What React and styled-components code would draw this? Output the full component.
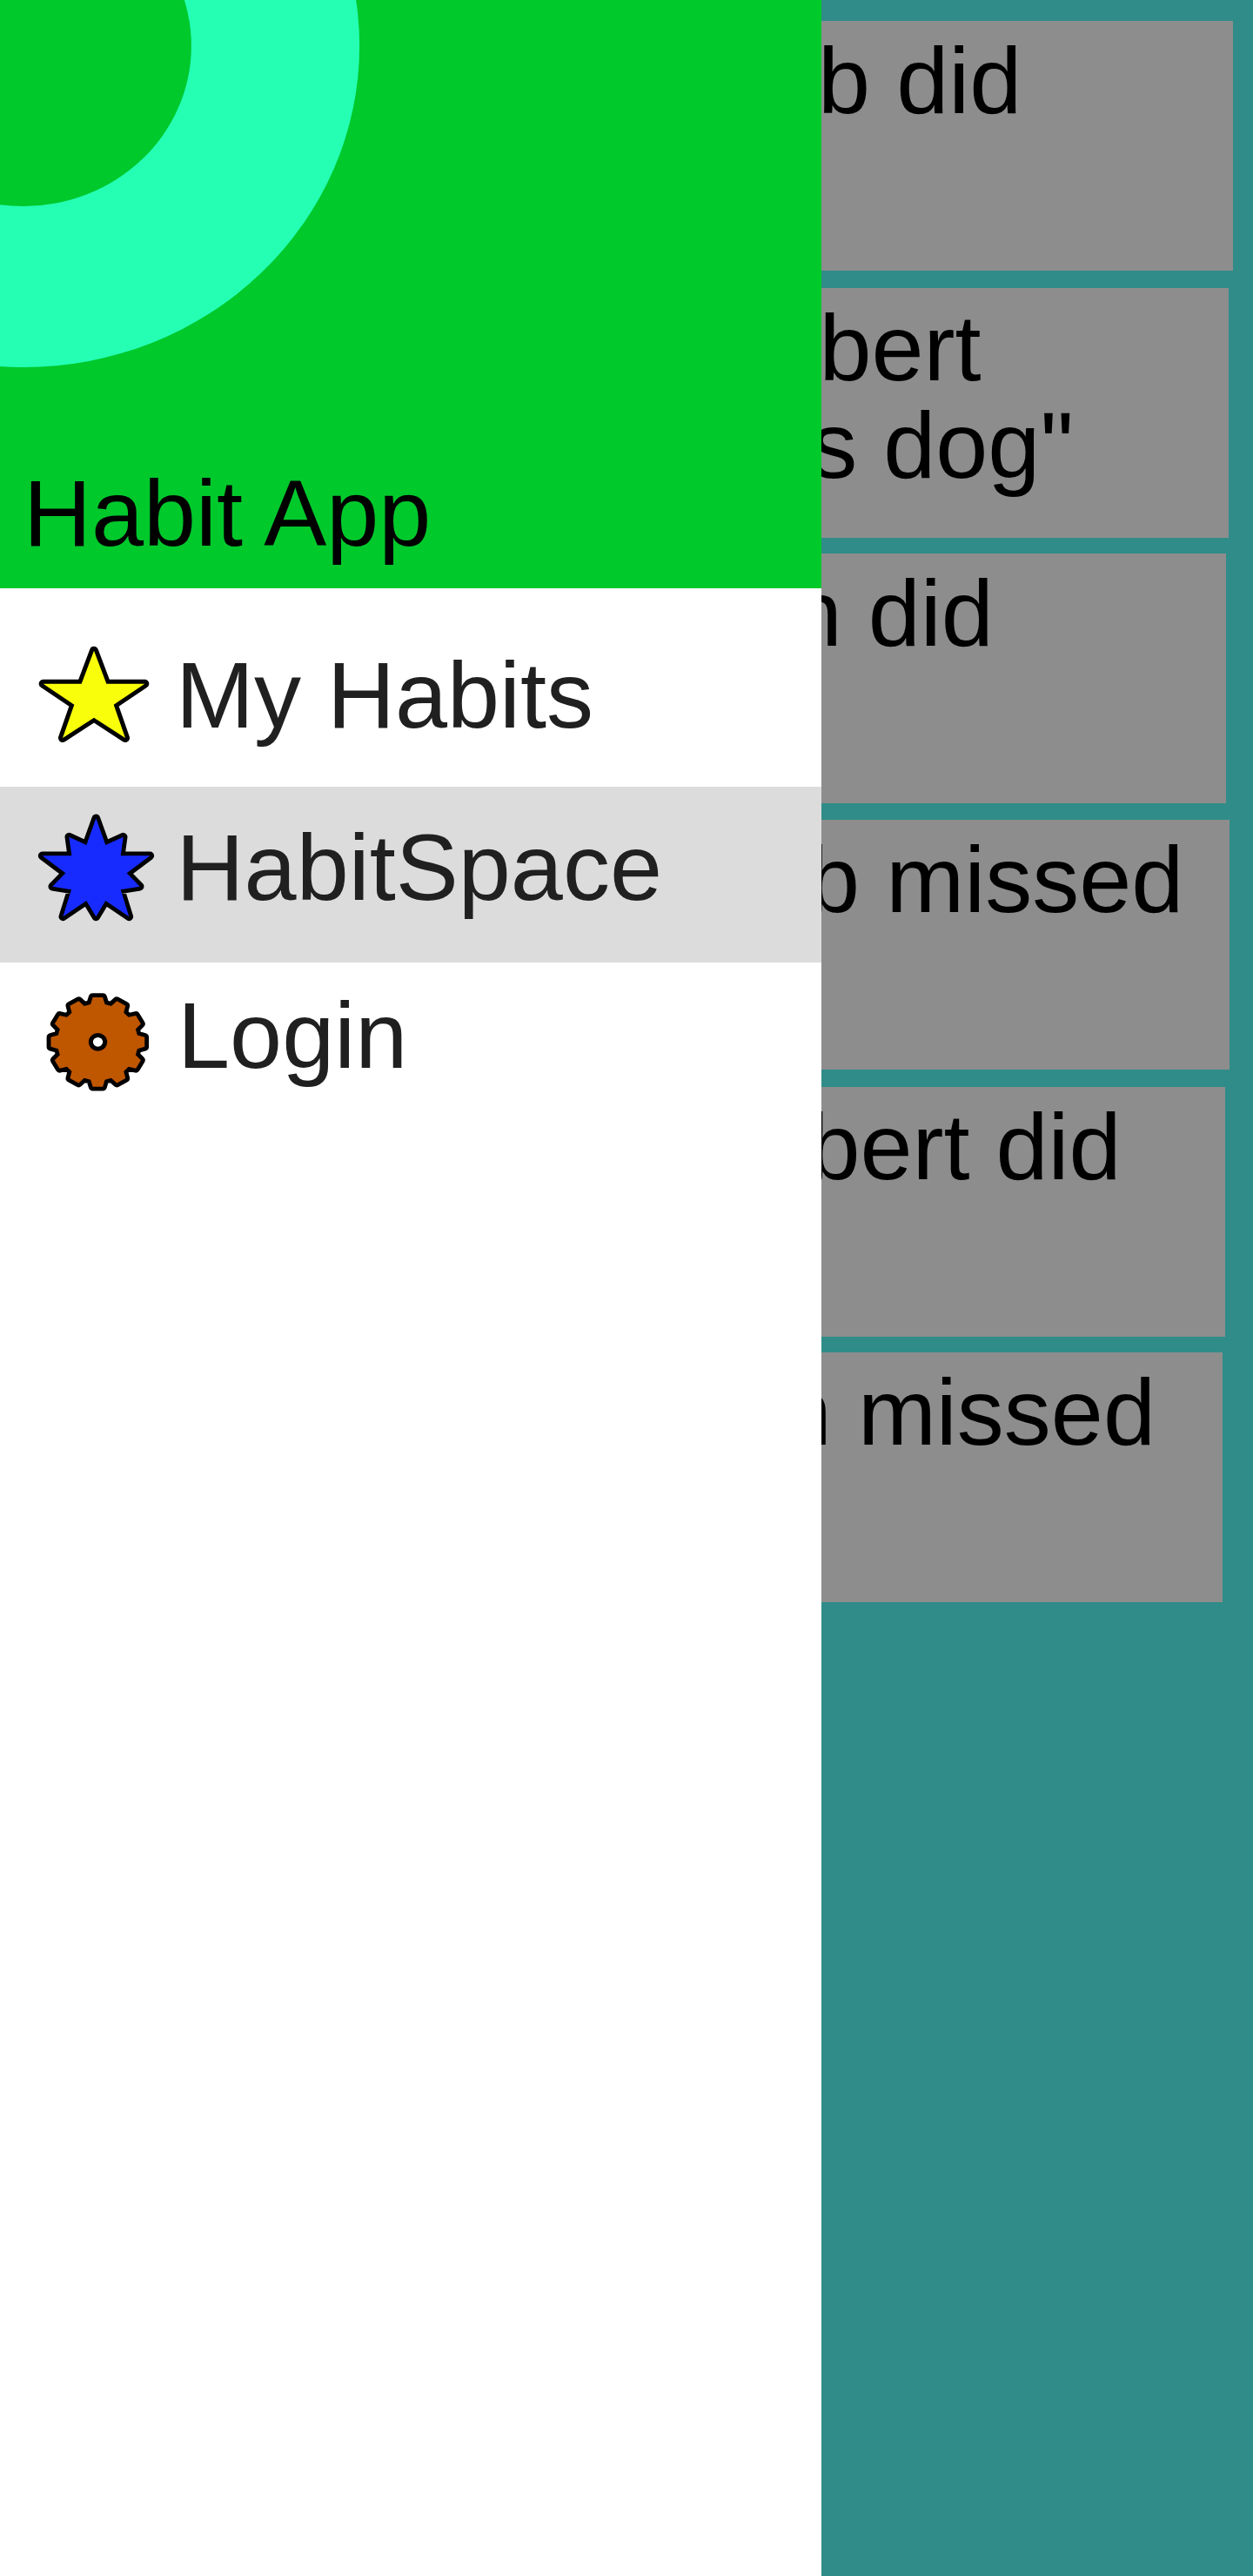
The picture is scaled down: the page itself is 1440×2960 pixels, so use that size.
import React from "react";
import styled, { createGlobalStyle } from "styled-components";

const GlobalStyle = createGlobalStyle`
  *, *::before, *::after { box-sizing: border-box; }
  body {
    margin: 0;
    background: #308c88;
    font-family: "Liberation Sans", Arial, sans-serif;
    font-size: 108px;
  }
`;

const Screen = styled.div`
  display: flex;
  width: 1440px;
  height: 2960px;
  overflow: hidden;
  background: #308c88;
`;

const Drawer = styled.nav`
  flex: none;
  width: 944px;
  height: 100%;
  background: #ffffff;
`;

const DrawerHeader = styled.header`
  position: relative;
  display: flex;
  align-items: flex-end;
  height: 676px;
  padding: 0 27px 26px;
  overflow: hidden;
  background: #00c92c;
`;

const HeaderRing = styled.svg`
  position: absolute;
  top: 0;
  left: 0;
`;

const AppTitle = styled.h1`
  position: relative;
  margin: 0;
  font-size: 108px;
  font-weight: 400;
  line-height: 120px;
  color: #000000;
  white-space: nowrap;
`;

const Menu = styled.ul`
  margin: 0;
  padding: 0;
  list-style: none;
`;

const MenuItem = styled.li`
  display: flex;
  align-items: flex-start;
  height: ${(p) => p.$height}px;
  padding-left: ${(p) => p.$inset}px;
  background: ${(p) => (p.$active ? "#dcdcdc" : "transparent")};
`;

const Icon = styled.svg`
  flex: none;
  margin-top: ${(p) => p.$top}px;
  stroke: #000000;
  stroke-linejoin: round;
`;

const MenuLabel = styled.span`
  padding-top: ${(p) => p.$top}px;
  padding-left: ${(p) => p.$gap}px;
  line-height: 120px;
  color: #202020;
  white-space: nowrap;
`;

const Feed = styled.main`
  display: flex;
  flex-direction: column;
  align-items: flex-start;
  padding-top: 24px;
`;

const Card = styled.article`
  width: ${(p) => p.$width}px;
  height: 287px;
  margin-bottom: ${(p) => p.$gap}px;
  padding-top: 13px;
  overflow: hidden;
  background: #8d8d8d;
`;

const CardLine = styled.div`
  line-height: 111.5px;
  text-indent: -${(p) => p.$shift}px;
  color: #000000;
  white-space: nowrap;
`;

function StarIcon() {
  return (
    <Icon $top={54} width="160" height="140" viewBox="0 0 480 420">
      <polygon
        points="234,53 277,167 409,167 302,239 342,354 234,284 126,354 166,239 59,167 191,167"
        fill="#f9ff0a"
        strokeWidth="30"
        paintOrder="stroke"
      />
    </Icon>
  );
}

function BurstIcon() {
  return (
    <Icon $top={16} width="160" height="150" viewBox="0 0 480 450">
      <polygon
        points="241,61 274,153 335,125 326,190 427,190 347,250 392,296 326,307 355,400 274,345 241,400 208,345 127,400 156,307 91,296 136,250 56,190 157,190 148,125 208,153"
        fill="#172bff"
        strokeWidth="29"
        paintOrder="stroke"
      />
    </Icon>
  );
}

const TOOTH = [
  [-23.5, 130],
  [-16.5, 154],
  [16.5, 154],
  [23.5, 130],
];

const gearPoints = Array.from({ length: 12 }, (_, k) => {
  const a = (k * Math.PI) / 6;
  return TOOTH.map(([x, r]) => {
    const px = 217 + 1.05 * (r * Math.sin(a) + x * Math.cos(a));
    const py = 232 - (r * Math.cos(a) - x * Math.sin(a));
    return `${px.toFixed(1)},${py.toFixed(1)}`;
  }).join(" ");
}).join(" ");

function GearIcon() {
  return (
    <Icon $top={14} width="150" height="150" viewBox="0 0 450 450">
      <polygon points={gearPoints} fill="#bf5600" strokeWidth="29" paintOrder="stroke" />
      <ellipse cx="217.5" cy="232" rx="24.5" ry="23.5" fill="#ffffff" strokeWidth="15" />
    </Icon>
  );
}

const menu = [
  { label: "My Habits", icon: StarIcon, height: 228, inset: 30, top: 62.6, gap: 12 },
  { label: "HabitSpace", icon: BurstIcon, height: 202, inset: 30, top: 33, gap: 12.6, active: true },
  { label: "Login", icon: GearIcon, height: 202, inset: 40, top: 23.5, gap: 14 },
];

const cards = [
  { width: 473, gap: 20, lines: [["b did", 3.9]] },
  { width: 468, gap: 18, lines: [["bert", 2.6], ['s dog"', 12.8]] },
  { width: 465, gap: 19, lines: [["n did", 36.3]] },
  { width: 469, gap: 20, lines: [["b missed", 15.9]] },
  { width: 464, gap: 18, lines: [["bert did", 15.6]] },
  { width: 461, gap: 0, lines: [["n missed", 48.2]] },
];

export default function App() {
  return (
    <>
      <GlobalStyle />
      <Screen>
        <Drawer>
          <DrawerHeader>
            <HeaderRing width="440" height="440" viewBox="0 0 440 440">
              <ellipse cx="26.7" cy="52.7" rx="386.4" ry="369.3" fill="#24ffb4" />
              <ellipse cx="26.7" cy="52.7" rx="193.2" ry="184.4" fill="#00c92c" />
            </HeaderRing>
            <AppTitle>Habit App</AppTitle>
          </DrawerHeader>
          <Menu>
            {menu.map(({ label, icon: ItemIcon, height, inset, top, gap, active }) => (
              <MenuItem key={label} $height={height} $inset={inset} $active={active}>
                <ItemIcon />
                <MenuLabel $top={top} $gap={gap}>{label}</MenuLabel>
              </MenuItem>
            ))}
          </Menu>
        </Drawer>
        <Feed>
          {cards.map((card, i) => (
            <Card key={i} $width={card.width} $gap={card.gap}>
              {card.lines.map(([text, shift]) => (
                <CardLine key={text} $shift={shift}>{text}</CardLine>
              ))}
            </Card>
          ))}
        </Feed>
      </Screen>
    </>
  );
}
